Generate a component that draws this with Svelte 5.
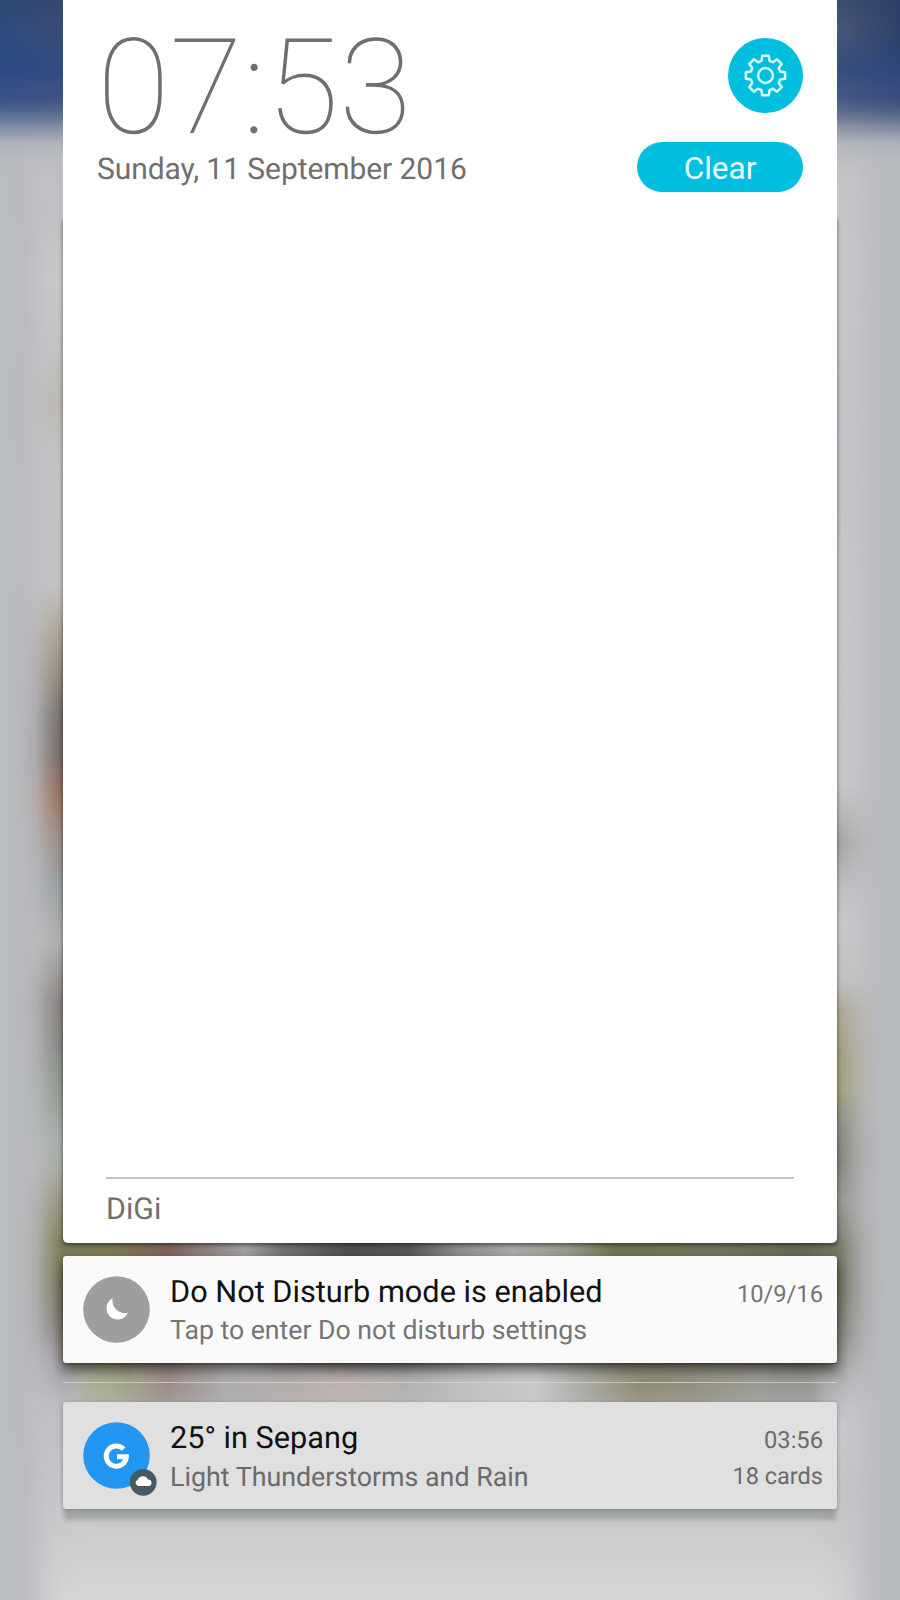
<script>
  // Outline of an eight-toothed gear with slightly flared teeth.
  function gear(cx, cy, outer, inner) {
    const pts = [];
    for (let i = 0; i < 8; i++) {
      const mid = (i * Math.PI) / 4 - Math.PI / 2;
      for (const [offset, r] of [[-0.27, inner], [-0.165, outer], [0.165, outer], [0.27, inner]]) {
        pts.push(`${(cx + r * Math.cos(mid + offset)).toFixed(2)} ${(cy + r * Math.sin(mid + offset)).toFixed(2)}`);
      }
    }
    return `M${pts.join('L')}Z`;
  }
  const gearPath = gear(37.5, 37.5, 19.9, 15.2);
</script>

<div class="screen">
  <div class="wallpaper" aria-hidden="true">
    <div class="side left"></div>
    <div class="side right"></div>
    <div class="floor"></div>
    <div class="sky"></div>
    <div class="band upper"></div>
    <div class="band lower"></div>
  </div>

  <main class="shade">
    <section class="panel">
      <header>
        <div class="when">
          <div class="clock">07:53</div>
          <div class="date">Sunday, 11 September 2016</div>
        </div>
        <div class="actions">
          <button class="settings" aria-label="Settings">
            <svg width="75" height="75" viewBox="0 0 75 75" fill="none" stroke="#d9fbff" stroke-width="2.5" stroke-linejoin="round">
              <path d={gearPath} />
              <circle cx="37.5" cy="37.5" r="7.4" />
            </svg>
          </button>
          <button class="clear"><span>Clear</span></button>
        </div>
      </header>
      <footer><span>DiGi</span></footer>
    </section>

    <article class="card first">
      <svg class="icon" width="74" height="68" viewBox="0 0 74 68">
        <circle cx="33.5" cy="33.5" r="33.3" fill="#9e9e9e" />
        <path d="M29.6 22.3A11.2 11.2 0 1 0 44.9 36.8A12.6 12.6 0 0 1 29.6 22.3Z" fill="#fff" />
      </svg>
      <div class="body">
        <div class="row"><span class="title">Do Not Disturb mode is enabled</span><span class="meta">10/9/16</span></div>
        <div class="row second"><span class="text">Tap to enter Do not disturb settings</span></div>
      </div>
    </article>

    <hr />

    <article class="card last">
      <svg class="icon" width="74" height="75" viewBox="0 0 74 75">
        <circle cx="33.5" cy="33.5" r="33.3" fill="#2196f3" />
        <path d="M40.6 27.1A10.1 10.1 0 1 0 43.4 34.8H34" fill="none" stroke="#fff" stroke-width="4.9" />
        <circle cx="60.2" cy="60.3" r="13.4" fill="#455a64" />
        <path d="M55.4 63.9A3.2 3.2 0 0 1 54.8 57.7A5.6 5.6 0 0 1 65 57.5A3.2 3.2 0 0 1 65.6 63.9Z" fill="#fff" />
      </svg>
      <div class="body">
        <div class="row"><span class="title">25° in Sepang</span><span class="meta">03:56</span></div>
        <div class="row second"><span class="text">Light Thunderstorms and Rain</span><span class="meta count">18 cards</span></div>
      </div>
    </article>
  </main>
</div>

<style>
  :global(body) { margin: 0; }
  .screen {
    position: relative;
    width: 900px;
    height: 1600px;
    overflow: hidden;
    font-family: Roboto, "Noto Sans", sans-serif;
    text-rendering: geometricPrecision;
    color: #6f6f6f;
  }
  .wallpaper {
    position: absolute;
    inset: 0;
    background: linear-gradient(90deg, #b8bdc0 0, #babcc0 25px, #c4c6c8 62px, #c8caca 450px, #c4c6c7 838px, #babcc0 875px, #b8bcbf 100%);
  }
  .wallpaper div { position: absolute; }
  .side { top: 0; width: 120px; height: 1600px; }
  .left {
    left: 12px;
    background: linear-gradient(180deg, #bcbdbf 150px, #bebfc1 215px, #c8caca 280px, #c0c2c2 350px, #b9b7ad 405px, #c0c1bf 450px, #c0c1c3 585px, #b7b1a8 609px, #a19582 648px, #736a64 713px, #6f625c 755px, #966b57 798px, #97847a 835px, #939899 884px, #abada8 940px, #807b79 1002px, #7f7f7b 1040px, #8b9488 1088px, #a0a9a4 1140px, #a4a69c 1170px, #93917c 1198px, #7d7c58 1240px, #747454 1285px, #7f7873 1325px, #a29fa8 1362px, #bbbcbf 1405px, #c5c6c8 1490px, #d0d2d2 1600px);
    mask-image: linear-gradient(90deg, transparent 0, rgba(0,0,0,.06) 12px, rgba(0,0,0,.24) 24px, rgba(0,0,0,.6) 36px, #000 51px);
  }
  .right {
    right: 11px;
    background: linear-gradient(180deg, #bfc1c3 150px, #c6c8c9 250px, #c5c6c8 350px, #c2c3c5 450px, #c8c9ca 620px, #c6c8c9 785px, #a2a19f 843px, #bbbdbe 887px, #c8cbcb 925px, #bfc0bf 980px, #aaa48f 1010px, #9b9777 1060px, #9b9a75 1090px, #818679 1130px, #7c7e73 1160px, #8e9089 1200px, #70735f 1250px, #6c6e5a 1290px, #838380 1340px, #aeafb0 1380px, #bfc1c3 1405px, #c9cbcd 1430px, #c1c3c4 1500px, #cecfd0 1600px);
    mask-image: linear-gradient(270deg, transparent 0, rgba(0,0,0,.06) 12px, rgba(0,0,0,.22) 24px, rgba(0,0,0,.55) 37px, #000 53px);
  }
  .sky {
    inset: 0 0 auto;
    height: 175px;
    background:
      linear-gradient(180deg, transparent 96px, rgba(182,186,196,.45) 119px, rgba(184,187,194,.88) 143px, #bebfc1 170px),
      linear-gradient(90deg, #2d4b7c 0, #3a4c78 60px, #485675 840px, #2e4168 100%);
    mask-image: linear-gradient(180deg, #000 132px, transparent 175px);
  }
  .sky::after {
    content: "";
    position: absolute;
    inset: 0;
    background: linear-gradient(180deg, rgba(45,65,104,.45) 0, transparent 30px, rgba(42,74,132,.65) 68px, rgba(64,86,140,.6) 94px, transparent 126px);
  }
  .floor {
    left: 30px; right: 30px; top: 1490px; height: 110px;
    background: linear-gradient(180deg, #c6c8ca 0, #cacccd 40px, #cfd1d1 70px, #d7d7d7 110px);
    mask-image: linear-gradient(90deg, transparent, rgba(0,0,0,.3) 25px, #000 60px calc(100% - 60px), rgba(0,0,0,.3) calc(100% - 25px), transparent), linear-gradient(180deg, transparent, #000 20px);
    mask-composite: intersect;
  }
  .band { left: 53px; right: 53px; }
  .upper {
    top: 1236px; height: 170px;
    background: linear-gradient(90deg, #76775a 10px, #7b7b50 55px, #80625a 115px, #8f8380 155px, #a0a1a0 192px, #707170 230px, #4e4e4e 295px, #555755 355px, #8a8b8a 405px, #a9aaa9 460px, #999a8b 515px, #717551 560px, #74755a 665px, #666850 750px, #73755f 784px);
    mask-image: linear-gradient(90deg, transparent, #000 34px calc(100% - 34px), transparent), linear-gradient(180deg, #000 124px, transparent 152px);
    mask-composite: intersect;
  }
  .lower {
    top: 1354px; height: 62px;
    background: linear-gradient(90deg, #b0afb2 10px, #a3ab88 55px, #978883 115px, #aaa9a9 175px, #b1aaa7 240px, #bcb0ad 290px, #b0b0ad 355px, #bdbdbc 410px, #cacaca 480px, #a5a49e 535px, #8c876e 585px, #8d8a79 640px, #979690 700px, #929290 755px, #acadae 784px);
    mask-image: linear-gradient(90deg, transparent, #000 34px calc(100% - 34px), transparent), linear-gradient(180deg, transparent, rgba(0,0,0,.75) 20px, #000 38px);
    mask-composite: intersect;
  }
  .lower::after {
    content: "";
    position: absolute;
    inset: 30px 0 0;
    background: linear-gradient(180deg, transparent, rgba(200,202,204,.5));
  }
  .shade {
    position: relative;
    display: flex;
    flex-direction: column;
    width: 774px;
    margin: 0 auto;
  }
  .panel {
    position: relative;
    display: flex;
    flex-direction: column;
    justify-content: space-between;
    height: 1242.5px;
    background: #fff;
    border-radius: 0 0 5px 5px;
  }
  .panel::before {
    content: "";
    position: absolute;
    z-index: -1;
    inset: 218px 0 0;
    border-radius: 0 0 5px 5px;
    box-shadow: 0 2px 4px rgba(0,0,0,.5);
  }
  .shade { z-index: 0; }
  header { display: flex; justify-content: space-between; padding: 38px 34px 0; }
  .when { display: flex; flex-direction: column; white-space: nowrap; }
  .clock { height: 111px; padding-top: 2px; font-size: 133px; font-weight: 100; line-height: 97px; }
  .date { padding-top: 1px; font-size: 30px; line-height: 36px; letter-spacing: -0.07px; }
  .actions { display: flex; flex-direction: column; align-items: flex-end; gap: 29px; }
  button { border: 0; padding: 0; background: #00bfde; color: #e8ffff; font-family: inherit; }
  .settings { width: 75px; height: 75px; border-radius: 50%; }
  .settings svg { display: block; }
  .clear { width: 166px; height: 50px; border-radius: 25px; }
  .clear span { display: block; padding-top: 3px; font-size: 31.5px; line-height: 47px; }
  footer {
    height: 64px;
    margin: 0 43px;
    border-top: 2px solid #c2c2c2;
    font-size: 30.3px;
    line-height: 61px;
  }
  .card {
    display: flex;
    box-sizing: border-box;
    height: 106.5px;
    padding: 20px 14px 0 20px;
    border-radius: 3px;
    color: #757575;
  }
  .icon { flex: none; width: 74px; }
  .first { margin-top: 13.5px; background: #fafafa; box-shadow: 0 7px 12px rgba(0,0,0,.48), 0 1px 3px rgba(0,0,0,.3); }
  .last { background: #e0e0e0; box-shadow: 0 12px 4px -1px rgba(110,114,114,.42), 0 1px 4px rgba(0,0,0,.25); color: #6b6b6b; }
  hr { width: 100%; height: 1.5px; margin: 19px 0; border: 0; background: rgba(215,215,210,.75); }
  .body { flex: 1; padding-left: 13px; white-space: nowrap; }
  .row { display: flex; justify-content: space-between; height: 32px; line-height: 32px; }
  .second { margin-top: 6.2px; }
  .last .second { margin-top: 7px; }
  .title { padding-top: 0.6px; font-size: 30.7px; color: #111; }
  .text { font-size: 26.65px; }
  .last .text { font-size: 26.8px; }
  .meta { padding-top: 2.4px; font-size: 23.7px; }
  .last .count { padding-top: 0; margin-top: -1px; font-size: 23.5px; }
</style>
